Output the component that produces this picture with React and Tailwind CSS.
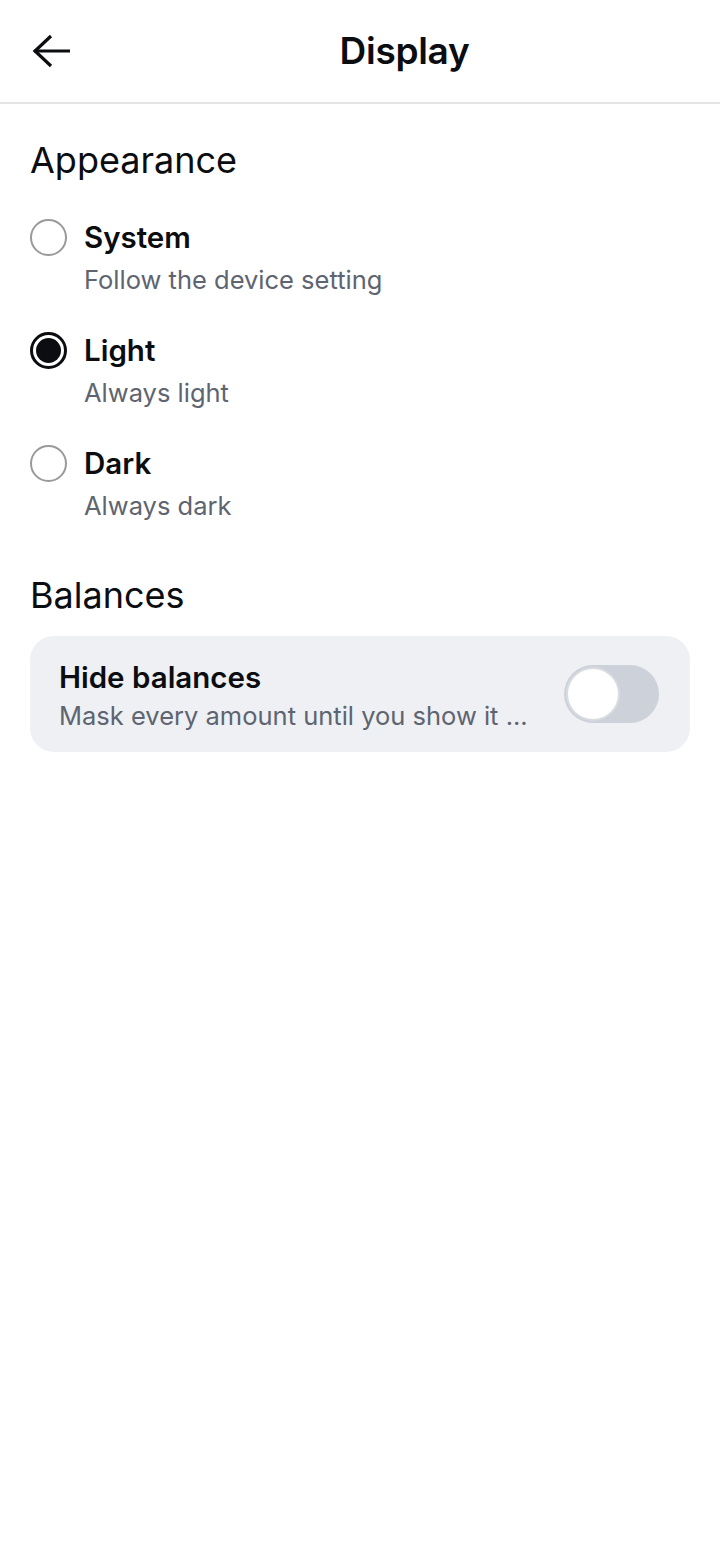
import React, { useState } from "react";

const options = [
  { id: "system", label: "System", desc: "Follow the device setting" },
  { id: "light", label: "Light", desc: "Always light" },
  { id: "dark", label: "Dark", desc: "Always dark" },
];

const BackArrow = () => (
  <svg width="40" height="34" viewBox="0 0 40 34" fill="none" stroke="currentColor" strokeWidth="3.2">
    <path d="M3 17H39" />
    <path d="M20 2L4 17L20 32" strokeLinejoin="miter" />
  </svg>
);

const Radio = ({ checked }) => (
  <div
    className={`w-[37px] h-[37px] rounded-full flex items-center justify-center shrink-0 ${
      checked ? "border-[3px] border-[#0b0d10]" : "border-2 border-[#9a9a9a]"
    }`}
  >
    {checked && <div className="w-[25px] h-[25px] rounded-full bg-[#0b0d10]" />}
  </div>
);

const App = () => {
  const [theme, setTheme] = useState("light");
  const [hidden, setHidden] = useState(false);

  return (
    <div
      className="min-h-screen bg-white text-[#0b0d10]"
      style={{ fontFamily: "Inter, 'Noto Sans', sans-serif" }}
    >
      <header className="h-[104px] flex items-center border-b-2 border-[#e3e4e6] pl-[31px]">
        <button className="w-[58px] h-[58px] flex items-center justify-start">
          <BackArrow />
        </button>
        <h1 className="flex-1 text-center text-[37px] font-semibold tracking-[-0.3px] leading-[48px]">
          Display
        </h1>
      </header>

      <main className="px-[30px]">
        <h2 className="text-[36px] font-normal mt-[31px] mb-[34px] leading-[50px]">Appearance</h2>

        <div className="flex flex-col gap-[36px]">
          {options.map((o) => (
            <button
              key={o.id}
              onClick={() => setTheme(o.id)}
              className="grid grid-cols-[37px_1fr] gap-x-[17px] text-left"
            >
              <div className="h-[36px] flex items-center">
                <Radio checked={theme === o.id} />
              </div>
              <p className="text-[29.5px] font-semibold leading-[36px]">{o.label}</p>
              <p className="col-start-2 text-[25.5px] text-[#5e6470] leading-[32px] mt-[9px]">{o.desc}</p>
            </button>
          ))}
        </div>

        <h2 className="text-[36px] font-normal mt-[48px] leading-[50px]">Balances</h2>

        <div className="mt-[16px] bg-[#eef0f3] rounded-[24px] pl-[29px] pr-[31px] h-[116px] flex items-center justify-between">
          <div className="min-w-0 pt-[3px]">
            <p className="text-[29.5px] font-semibold leading-[36px]">Hide balances</p>
            <p className="text-[25.5px] text-[#5e6470] leading-[32px] mt-[5px]">
              Mask every amount until you show it ...
            </p>
          </div>
          <button
            onClick={() => setHidden(!hidden)}
            className={`w-[95px] h-[58px] rounded-full p-[2px] flex items-center shrink-0 ${
              hidden ? "bg-[#0b0d10] justify-end" : "bg-[#cdd1d9] justify-start"
            }`}
          >
            <span className="w-[54px] h-[54px] rounded-full bg-white border-2 border-[#d8dbe0]" />
          </button>
        </div>
      </main>
    </div>
  );
};

export default App;
